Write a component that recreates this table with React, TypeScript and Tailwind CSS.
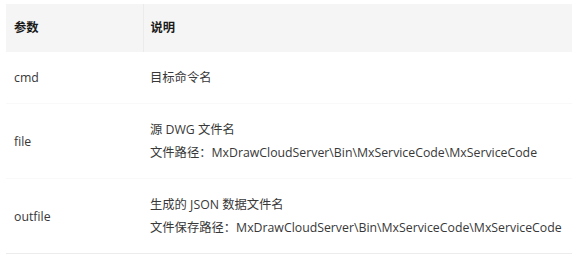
import React from 'react';

interface Row {
  name: string;
  lines: string[];
}

const rows: Row[] = [
  { name: 'cmd', lines: ['目标命令名'] },
  {
    name: 'file',
    lines: ['源 DWG 文件名', '文件路径：MxDrawCloudServer\\Bin\\MxServiceCode\\MxServiceCode'],
  },
  {
    name: 'outfile',
    lines: ['生成的 JSON 数据文件名', '文件保存路径：MxDrawCloudServer\\Bin\\MxServiceCode\\MxServiceCode'],
  },
];

export default function App() {
  return (
    <div
      className="w-[578px] h-[257px] bg-white pt-[2px] pl-[6px] text-[12.3px] text-[#383838]"
      style={{ fontFamily: '"Open Sans", "Noto Sans CJK SC", sans-serif' }}
    >
      <table className="w-[566px] border-collapse border-t border-b border-[#ececec] table-fixed">
        <colgroup>
          <col className="w-[137px]" />
          <col />
        </colgroup>
        <thead>
          <tr className="bg-[#f5f5f5] h-[49px]">
            <th className="text-left font-bold text-[#1a1a1a] px-[8px] border-r border-[#ebebeb] border-t-2 border-t-white">
              参数
            </th>
            <th className="text-left font-bold text-[#1a1a1a] px-[7px] border-t-2 border-t-white">说明</th>
          </tr>
        </thead>
        <tbody>
          {rows.map((row) => (
            <tr key={row.name} className="border-b border-[#f9f9f9] last:border-b-0">
              <td className="px-[8px] py-[14px] leading-[23px] align-middle">{row.name}</td>
              <td className="px-[7px] py-[14px] leading-[23px] align-middle whitespace-nowrap">
                {row.lines.map((line) => (
                  <div key={line}>{line}</div>
                ))}
              </td>
            </tr>
          ))}
        </tbody>
      </table>
    </div>
  );
}
